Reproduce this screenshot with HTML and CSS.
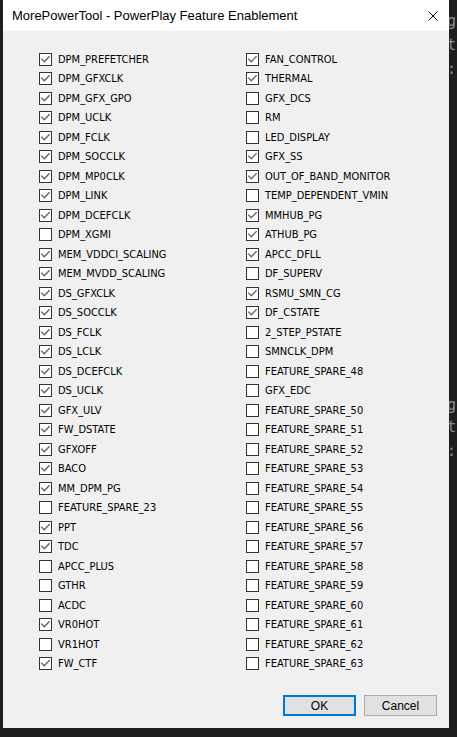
FILE: index.html
```html
<!DOCTYPE html>
<html lang="en">
<head>
    <meta charset="UTF-8">
    <title>PowerPlay Feature Enablement</title>
    <link rel="stylesheet" href="styles.css">
</head>
<body>
<svg class="defs" width="0" height="0">
    <symbol id="tick" viewBox="0 0 11 11">
        <polyline points="1.2,4.6 4.3,7.7 9.6,2.2" fill="none" stroke="#5f5f5f" stroke-width="1.3"/>
    </symbol>
</svg>
<div id="backdrop">
    <span class="frag f1">g</span>
    <span class="frag f2">tr</span>
    <span class="frag f3">:</span>
    <span class="frag f4">g</span>
    <span class="frag f5">tr</span>
    <span class="frag f6">:</span>
</div>
<div id="window">
    <div id="titlebar">
        <span id="title">MorePowerTool - PowerPlay Feature Enablement</span>
        <svg id="close" width="10" height="10" viewBox="0 0 10 10">
            <path d="M0.5 0.5L9.5 9.5M9.5 0.5L0.5 9.5" stroke="#000" stroke-width="1"/>
        </svg>
    </div>
    <div id="client">
        <div id="features">
            <div class="col">
                <label class="opt"><svg class="box"><use href="#tick"/></svg>DPM_PREFETCHER</label>
                <label class="opt"><svg class="box"><use href="#tick"/></svg>DPM_GFXCLK</label>
                <label class="opt"><svg class="box"><use href="#tick"/></svg>DPM_GFX_GPO</label>
                <label class="opt"><svg class="box"><use href="#tick"/></svg>DPM_UCLK</label>
                <label class="opt"><svg class="box"><use href="#tick"/></svg>DPM_FCLK</label>
                <label class="opt"><svg class="box"><use href="#tick"/></svg>DPM_SOCCLK</label>
                <label class="opt"><svg class="box"><use href="#tick"/></svg>DPM_MP0CLK</label>
                <label class="opt"><svg class="box"><use href="#tick"/></svg>DPM_LINK</label>
                <label class="opt"><svg class="box"><use href="#tick"/></svg>DPM_DCEFCLK</label>
                <label class="opt"><svg class="box"></svg>DPM_XGMI</label>
                <label class="opt"><svg class="box"><use href="#tick"/></svg>MEM_VDDCI_SCALING</label>
                <label class="opt"><svg class="box"><use href="#tick"/></svg>MEM_MVDD_SCALING</label>
                <label class="opt"><svg class="box"><use href="#tick"/></svg>DS_GFXCLK</label>
                <label class="opt"><svg class="box"><use href="#tick"/></svg>DS_SOCCLK</label>
                <label class="opt"><svg class="box"><use href="#tick"/></svg>DS_FCLK</label>
                <label class="opt"><svg class="box"><use href="#tick"/></svg>DS_LCLK</label>
                <label class="opt"><svg class="box"><use href="#tick"/></svg>DS_DCEFCLK</label>
                <label class="opt"><svg class="box"><use href="#tick"/></svg>DS_UCLK</label>
                <label class="opt"><svg class="box"><use href="#tick"/></svg>GFX_ULV</label>
                <label class="opt"><svg class="box"><use href="#tick"/></svg>FW_DSTATE</label>
                <label class="opt"><svg class="box"><use href="#tick"/></svg>GFXOFF</label>
                <label class="opt"><svg class="box"><use href="#tick"/></svg>BACO</label>
                <label class="opt"><svg class="box"><use href="#tick"/></svg>MM_DPM_PG</label>
                <label class="opt"><svg class="box"></svg>FEATURE_SPARE_23</label>
                <label class="opt"><svg class="box"><use href="#tick"/></svg>PPT</label>
                <label class="opt"><svg class="box"><use href="#tick"/></svg>TDC</label>
                <label class="opt"><svg class="box"></svg>APCC_PLUS</label>
                <label class="opt"><svg class="box"></svg>GTHR</label>
                <label class="opt"><svg class="box"></svg>ACDC</label>
                <label class="opt"><svg class="box"><use href="#tick"/></svg>VR0HOT</label>
                <label class="opt"><svg class="box"></svg>VR1HOT</label>
                <label class="opt"><svg class="box"><use href="#tick"/></svg>FW_CTF</label>
            </div>
            <div class="col">
                <label class="opt"><svg class="box"><use href="#tick"/></svg>FAN_CONTROL</label>
                <label class="opt"><svg class="box"><use href="#tick"/></svg>THERMAL</label>
                <label class="opt"><svg class="box"></svg>GFX_DCS</label>
                <label class="opt"><svg class="box"></svg>RM</label>
                <label class="opt"><svg class="box"></svg>LED_DISPLAY</label>
                <label class="opt"><svg class="box"><use href="#tick"/></svg>GFX_SS</label>
                <label class="opt"><svg class="box"><use href="#tick"/></svg>OUT_OF_BAND_MONITOR</label>
                <label class="opt"><svg class="box"></svg>TEMP_DEPENDENT_VMIN</label>
                <label class="opt"><svg class="box"><use href="#tick"/></svg>MMHUB_PG</label>
                <label class="opt"><svg class="box"><use href="#tick"/></svg>ATHUB_PG</label>
                <label class="opt"><svg class="box"><use href="#tick"/></svg>APCC_DFLL</label>
                <label class="opt"><svg class="box"></svg>DF_SUPERV</label>
                <label class="opt"><svg class="box"><use href="#tick"/></svg>RSMU_SMN_CG</label>
                <label class="opt"><svg class="box"><use href="#tick"/></svg>DF_CSTATE</label>
                <label class="opt"><svg class="box"></svg>2_STEP_PSTATE</label>
                <label class="opt"><svg class="box"></svg>SMNCLK_DPM</label>
                <label class="opt"><svg class="box"></svg>FEATURE_SPARE_48</label>
                <label class="opt"><svg class="box"></svg>GFX_EDC</label>
                <label class="opt"><svg class="box"></svg>FEATURE_SPARE_50</label>
                <label class="opt"><svg class="box"></svg>FEATURE_SPARE_51</label>
                <label class="opt"><svg class="box"></svg>FEATURE_SPARE_52</label>
                <label class="opt"><svg class="box"></svg>FEATURE_SPARE_53</label>
                <label class="opt"><svg class="box"></svg>FEATURE_SPARE_54</label>
                <label class="opt"><svg class="box"></svg>FEATURE_SPARE_55</label>
                <label class="opt"><svg class="box"></svg>FEATURE_SPARE_56</label>
                <label class="opt"><svg class="box"></svg>FEATURE_SPARE_57</label>
                <label class="opt"><svg class="box"></svg>FEATURE_SPARE_58</label>
                <label class="opt"><svg class="box"></svg>FEATURE_SPARE_59</label>
                <label class="opt"><svg class="box"></svg>FEATURE_SPARE_60</label>
                <label class="opt"><svg class="box"></svg>FEATURE_SPARE_61</label>
                <label class="opt"><svg class="box"></svg>FEATURE_SPARE_62</label>
                <label class="opt"><svg class="box"></svg>FEATURE_SPARE_63</label>
            </div>
        </div>
        <div id="buttons">
            <button class="btn default">OK</button>
            <button class="btn">Cancel</button>
        </div>
    </div>
</div>
</body>
</html>
```

FILE: styles.css
```css
*{
    margin: 0;
    padding: 0;
    box-sizing: border-box;
}
html, body{
    height: 100%;
}
body{
    background: #1e1e1e;
    overflow: hidden;
    position: relative;
    font-family: "Liberation Sans", Arial, sans-serif;
}
.defs{
    position: absolute;
}
#backdrop{
    position: absolute;
    left: 0;
    top: 0;
    width: 100%;
    height: 100%;
}
.frag{
    position: absolute;
    left: 447px;
    font-family: "DejaVu Sans Mono", monospace;
    font-size: 15px;
    color: #8c8c8c;
}
.f1{ top: 12px; }
.f2{ top: 36px; }
.f3{ top: 60px; color: #9a7fb0; }
.f4{ top: 396px; }
.f5{ top: 418px; }
.f6{ top: 442px; color: #9a7fb0; }

#window{
    position: relative;
    z-index: 1;
    margin-left: 3px;
    width: 446px;
    height: 728px;
    display: flex;
    flex-direction: column;
}
#titlebar{
    height: 31px;
    background: #ffffff;
    display: flex;
    align-items: center;
    justify-content: space-between;
    padding: 0 11px 0 9px;
}
#title{
    font-size: 13px;
    color: #000;
}
#client{
    flex: 1;
    background: #f0f0f0;
    display: flex;
    flex-direction: column;
    padding: 18.5px 12px 12px 36px;
}
#features{
    display: grid;
    grid-template-columns: 207px 1fr;
}
.opt{
    display: flex;
    align-items: center;
    height: 19.5px;
    font-family: "DejaVu Sans Condensed", "DejaVu Sans", sans-serif;
    font-stretch: condensed;
    font-size: 11px;
    color: #000;
    white-space: nowrap;
}
.box{
    width: 13px;
    height: 13px;
    border: 1px solid #333333;
    background: #ffffff;
    margin-right: 6px;
    flex: none;
}
#buttons{
    margin-top: auto;
    display: flex;
    justify-content: flex-end;
    gap: 8px;
}
.btn{
    width: 73px;
    height: 21px;
    background: #e1e1e1;
    border: 1px solid #adadad;
    font-family: "Liberation Sans", Arial, sans-serif;
    font-size: 12px;
    color: #000;
}
.btn.default{
    border: 2px solid #0078d7;
}
```
